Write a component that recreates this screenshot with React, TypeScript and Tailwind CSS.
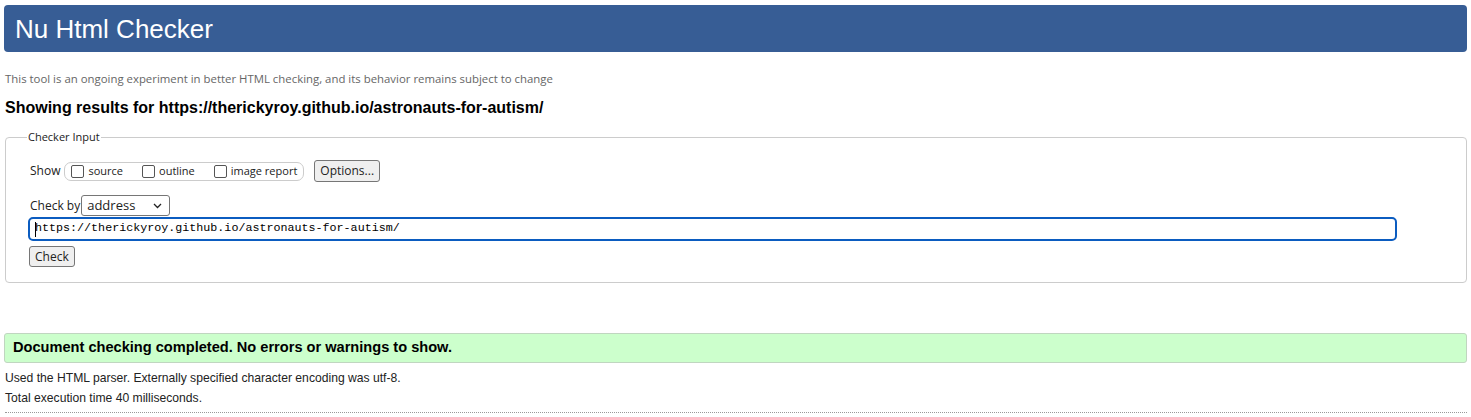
import React from "react";

const sans = "font-['Liberation_Sans',Arial,sans-serif]";
const ui = "font-['Open_Sans','Noto_Sans',sans-serif]";

function Box({ label }: { label: string }) {
  return (
    <span className="flex items-center gap-[4px]">
      <span className="w-[13px] h-[13px] border border-[#555] rounded-[2px] bg-white" />
      <span>{label}</span>
    </span>
  );
}

export default function App() {
  return (
    <div className={`${sans} bg-white text-black min-h-[417px] pt-[5px] px-[4px]`}>
      {/* header */}
      <div className="h-[47px] bg-[#375d95] rounded-[4px] flex items-center px-[11px]">
        <h1 className="text-white text-[26px] leading-none font-normal">Nu Html Checker</h1>
      </div>

      <p className={`${ui} text-[11.4px] text-[#666] mt-[20px] ml-[1px] leading-[14px]`}>
        This tool is an ongoing experiment in better HTML checking, and its behavior remains subject to change
      </p>
      <h2 className="text-[16px] font-bold mt-[13px] ml-[1px] leading-[18px]">
        Showing results for https://therickyroy.github.io/astronauts-for-autism/
      </h2>

      {/* checker input */}
      <fieldset className={`${ui} mt-[13px] ml-[1px] border border-[#ccc] rounded-[4px] pl-[24px] pr-[69px] pb-[15px] text-[12px] text-[#222]`}>
        <legend className="-ml-[3px] px-[1px] text-[11px] leading-[14px]">Checker Input</legend>
        <div className="flex items-center mt-[16px]">
          <span className="mr-[4px]">Show</span>
          <span className="flex items-center gap-[19px] border border-[#ccc] rounded-[7px] h-[19px] pl-[6px] pr-[6px] text-[11px]">
            <Box label="source" />
            <Box label="outline" />
            <Box label="image report" />
          </span>
          <button className="ml-[10px] h-[22px] px-[5px] bg-[#efefef] border border-[#767676] rounded-[3px] text-[12px] leading-none">
            Options...
          </button>
        </div>
        <div className="flex items-center mt-[13px]">
          <span className="mr-[1px]">Check by</span>
          <span className="flex items-center justify-between w-[89px] h-[21px] border border-[#767676] rounded-[3px] pl-[5px] pr-[7px] text-[13px]">
            <span>address</span>
            <svg width="9" height="6" viewBox="0 0 9 6">
              <path d="M1 1l3.5 3.5L8 1" stroke="#222" strokeWidth="1.3" fill="none" />
            </svg>
          </span>
        </div>
        <div className="mt-[1px] -ml-[2px] h-[24px] border-2 border-[#0b5cc0] rounded-[5px] flex items-center pl-[5px] font-['Liberation_Mono',monospace] text-[11.7px] text-black">
          <span className="w-[1px] h-[15px] bg-black -mr-[1px]" />
          https://therickyroy.github.io/astronauts-for-autism/
        </div>
        <button className="mt-[5px] -ml-[1px] h-[21px] px-[5px] bg-[#efefef] border border-[#767676] rounded-[3px] text-[12px] leading-none">
          Check
        </button>
      </fieldset>

      {/* result */}
      <div className="mt-[50px] h-[30px] bg-[#ccffcc] border border-[#c0d6c0] rounded-[3px] flex items-center px-[8px]">
        <p className="text-[14.6px] font-bold">Document checking completed. No errors or warnings to show.</p>
      </div>
      <div className="ml-[1px] text-[12.15px] text-[#222]">
        <p className="mt-[8px] leading-[14px]">Used the HTML parser. Externally specified character encoding was utf-8.</p>
        <p className="mt-[6px] leading-[14px]">Total execution time 40 milliseconds.</p>
      </div>
      <div className="mt-[7px] ml-[1px] border-t border-dotted border-[#999]" />
    </div>
  );
}
